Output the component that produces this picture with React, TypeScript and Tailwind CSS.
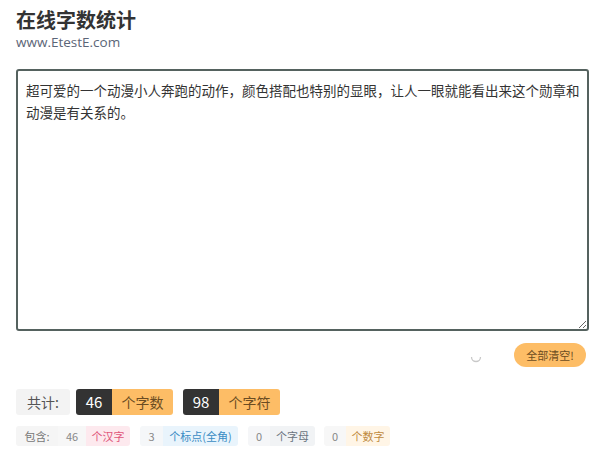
import React from "react";

export default function App() {
  const text =
    "超可爱的一个动漫小人奔跑的动作，颜色搭配也特别的显眼，让人一眼就能看出来这个勋章和动漫是有关系的。";
  return (
    <div
      className="w-[600px] h-[454px] bg-white pl-[16px] pr-[11px] pt-[6px] overflow-hidden"
      style={{ fontFamily: '"Noto Sans CJK SC", "Noto Sans", sans-serif' }}
    >
      <h1 className="text-[20px] leading-[27px] font-bold text-[#333]">在线字数统计</h1>
      <div className="text-[13.5px] leading-[16px] text-[#5b6577] mt-[1px]" style={{ fontFamily: '"Open Sans", "Noto Sans", sans-serif' }}>
        www.EtestE.com
      </div>
      <textarea
        defaultValue={text}
        className="block mt-[19px] w-full h-[262px] border-2 border-[#55625f] rounded-[3px] pl-[8px] pr-[6px] pt-[8px] text-[13.5px] leading-[22px] text-[#333] outline-none resize-y"
      />
      <div className="flex items-center justify-end mt-[12px] h-[24px] pr-[3px]">
        <svg width="14" height="14" viewBox="0 0 14 14" className="mr-[31px] mt-[4px]">
          <path d="M2.5 7 A4.5 4.5 0 0 0 11.5 7" fill="none" stroke="#c8c8c8" strokeWidth="1.3" />
        </svg>
        <button className="h-[24px] w-[72px] rounded-full bg-[#fdbd66] text-[11px] text-[#6b4c22]">
          全部清空!
        </button>
      </div>
      <div className="flex items-center mt-[22px] h-[26px]">
        <div className="h-full w-[54px] flex items-center justify-center bg-[#f3f3f3] rounded-[3px] text-[14px] text-[#555]">共计:</div>
        <div className="ml-[6px] h-full flex rounded-[3px] overflow-hidden">
          <div className="w-[36px] flex items-center justify-center bg-[#333] text-white text-[15px]">46</div>
          <div className="w-[61px] flex items-center justify-center bg-[#fdbd66] text-[#6b4c22] text-[14px]">个字数</div>
        </div>
        <div className="ml-[10px] h-full flex rounded-[3px] overflow-hidden">
          <div className="w-[36px] flex items-center justify-center bg-[#333] text-white text-[15px]">98</div>
          <div className="w-[61px] flex items-center justify-center bg-[#fdbd66] text-[#6b4c22] text-[14px]">个字符</div>
        </div>
      </div>
      <div className="flex items-center mt-[11px] h-[20px] text-[11px]">
        <div className="h-full flex rounded-[3px] overflow-hidden">
          <div className="w-[42px] flex items-center justify-center bg-[#f5f5f5] text-[#777]">包含:</div>
          <div className="w-[28px] flex items-center justify-center bg-[#f7f7f7] text-[#888]">46</div>
          <div className="w-[44px] flex items-center justify-center bg-[#fde9ee] text-[#e0557a]">个汉字</div>
        </div>
        <div className="ml-[10px] h-full flex rounded-[3px] overflow-hidden">
          <div className="w-[23px] flex items-center justify-center bg-[#f5f7f9] text-[#888]">3</div>
          <div className="w-[75px] flex items-center justify-center bg-[#e9f4fc] text-[#3a8cc4]">个标点(全角)</div>
        </div>
        <div className="ml-[10px] h-full flex rounded-[3px] overflow-hidden">
          <div className="w-[22px] flex items-center justify-center bg-[#f5f6f8] text-[#888]">0</div>
          <div className="w-[45px] flex items-center justify-center bg-[#f1f3f5] text-[#6a7480]">个字母</div>
        </div>
        <div className="ml-[9px] h-full flex rounded-[3px] overflow-hidden">
          <div className="w-[22px] flex items-center justify-center bg-[#f7f7f7] text-[#888]">0</div>
          <div className="w-[44px] flex items-center justify-center bg-[#fff5e6] text-[#c08a3e]">个数字</div>
        </div>
      </div>
    </div>
  );
}
